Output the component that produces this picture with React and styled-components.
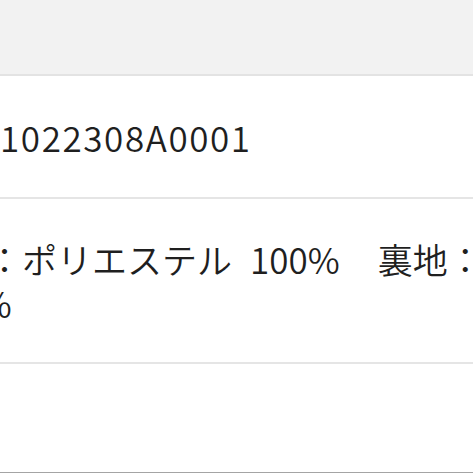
import React from 'react';
import styled, { createGlobalStyle } from 'styled-components';

const GlobalStyle = createGlobalStyle`
  html, body {
    margin: 0;
    padding: 0;
    background: #ffffff;
  }
  body {
    font-family: 'Noto Sans CJK JP', 'Noto Sans', sans-serif;
    color: #1f1f1f;
  }
`;

const Page = styled.div`
  width: 473px;
  height: 473px;
  overflow: hidden;
  display: flex;
  flex-direction: column;
  background: #ffffff;
  border-bottom: 1px solid #a4a4a4;
  box-sizing: border-box;
`;

const TopBand = styled.div`
  height: 74px;
  flex-shrink: 0;
  background: #f2f2f2;
  border-bottom: 2px solid #e3e3e3;
`;

const Row = styled.div`
  flex-shrink: 0;
  display: flex;
  flex-direction: column;
  justify-content: center;
  height: ${p => p.h}px;
  border-bottom: 2px solid #e5e5e5;
  overflow: hidden;
`;

const Line = styled.div`
  margin-left: ${p => p.offset}px;
  font-size: 35px;
  font-weight: 350;
  line-height: 44px;
  letter-spacing: ${p => p.ls || 0}px;
  white-space: nowrap;
`;

const Gap = styled.span`
  display: inline-block;
  width: ${p => p.w}px;
`;

const App = () => (
  <>
    <GlobalStyle />
    <Page>
      <TopBand />
      <Row h={121}>
        <Line offset={0} ls={1.6}>1022308A0001</Line>
      </Row>
      <Row h={163}>
        <Line offset={-83}>
          表地：ポリエステル<Gap w={18} />100%<Gap w={38} />裏地：ポリエステル
        </Line>
        <Line offset={-78}>100%</Line>
      </Row>
    </Page>
  </>
);

export default App;
